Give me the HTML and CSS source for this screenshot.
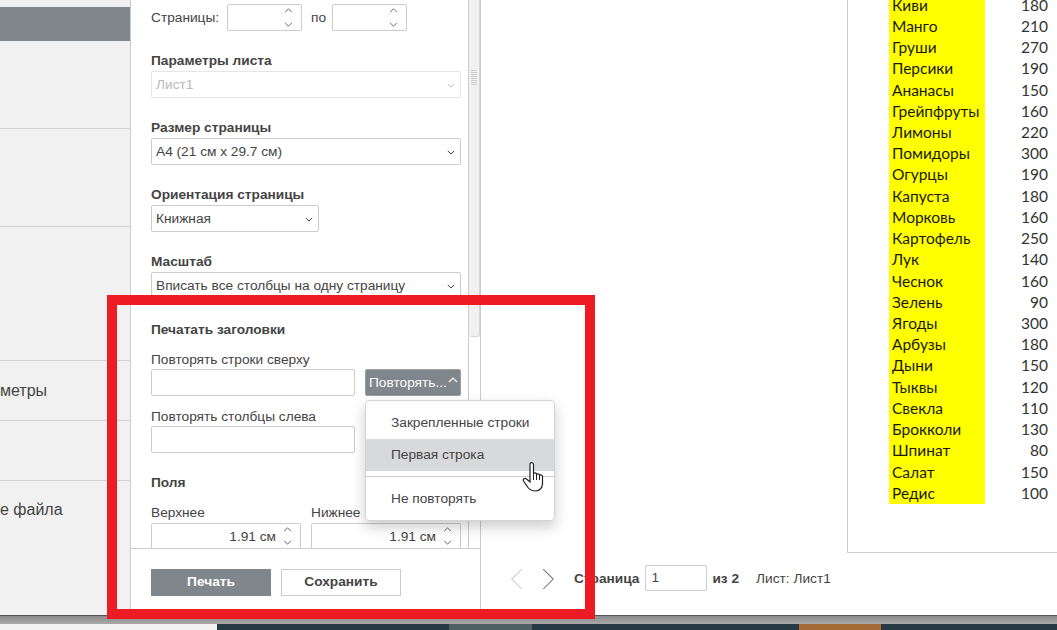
FILE: index.html
```html
<!DOCTYPE html>
<html lang="ru">
<head>
<meta charset="utf-8">
<title>Печать</title>
<link rel="stylesheet" href="styles.css">
</head>
<body>
<svg class="sprite" width="0" height="0" aria-hidden="true">
  <symbol id="down" viewBox="0 0 10 6"><path d="M1 1l4 4 4-4" fill="none" stroke="currentColor" stroke-width="1.2"/></symbol>
  <symbol id="up" viewBox="0 0 10 6"><path d="M1 5l4-4 4 4" fill="none" stroke="currentColor" stroke-width="1.2"/></symbol>
</svg>
<div class="app">
  <aside class="side">
    <div class="side-active"></div>
    <div class="side-item h88"></div>
    <div class="side-item h98"></div>
    <div class="side-item h134"></div>
    <div class="side-item h60">метры</div>
    <div class="side-item h60"></div>
    <div class="side-item h58 noline">е файла</div>
  </aside>

  <section class="panel">
    <div class="scroll">
      <div class="pages">
        <span class="pages-label">Страницы:</span>
        <div class="box spin w75"><svg class="ic-up"><use href="#up"/></svg><svg class="ic-down"><use href="#down"/></svg></div>
        <span class="po">по</span>
        <div class="box spin w75"><svg class="ic-up"><use href="#up"/></svg><svg class="ic-down"><use href="#down"/></svg></div>
      </div>
      <div class="group first-group">
        <div class="head">Параметры листа</div>
        <div class="box select disabled">Лист1<svg class="ic-sel"><use href="#down"/></svg></div>
      </div>
      <div class="group">
        <div class="head">Размер страницы</div>
        <div class="box select">A4 (21 см x 29.7 см)<svg class="ic-sel"><use href="#down"/></svg></div>
      </div>
      <div class="group">
        <div class="head">Ориентация страницы</div>
        <div class="box select w168">Книжная<svg class="ic-sel"><use href="#down"/></svg></div>
      </div>
      <div class="group">
        <div class="head">Масштаб</div>
        <div class="box select">Вписать все столбцы на одну страницу<svg class="ic-sel"><use href="#down"/></svg></div>
      </div>
      <div class="group-b">
        <div class="head">Печатать заголовки</div>
        <div class="label first">Повторять строки сверху</div>
        <div class="row">
          <div class="box w204"></div>
          <div class="repeat">Повторять...<svg class="ic-rep"><use href="#up"/></svg></div>
        </div>
        <div class="label second">Повторять столбцы слева</div>
        <div class="row"><div class="box w204"></div></div>
      </div>
      <div class="group-c">
        <div class="head">Поля</div>
        <div class="margins">
          <div><div class="label-m">Верхнее</div><div class="box spin val">1.91 см<svg class="ic-up"><use href="#up"/></svg><svg class="ic-down"><use href="#down"/></svg></div></div>
          <div><div class="label-m">Нижнее</div><div class="box spin val">1.91 см<svg class="ic-up"><use href="#up"/></svg><svg class="ic-down"><use href="#down"/></svg></div></div>
        </div>
      </div>
      <div class="scrollbar"><div class="thumb"><div class="grip"></div></div></div>
    </div>
    <div class="foot">
      <div class="btn primary">Печать</div>
      <div class="btn">Сохранить</div>
    </div>
    <div class="menu">
      <div class="menu-item">Закрепленные строки</div>
      <div class="menu-item hover">Первая строка</div>
      <div class="menu-sep"></div>
      <div class="menu-item">Не повторять</div>
    </div>
  </section>

  <main class="preview">
    <div class="stage">
      <div class="sheet">
        <div class="tbl">
          <div class="tr"><span class="n">Киви</span><span class="v">180</span></div>
          <div class="tr"><span class="n">Манго</span><span class="v">210</span></div>
          <div class="tr"><span class="n">Груши</span><span class="v">270</span></div>
          <div class="tr"><span class="n">Персики</span><span class="v">190</span></div>
          <div class="tr"><span class="n">Ананасы</span><span class="v">150</span></div>
          <div class="tr"><span class="n">Грейпфруты</span><span class="v">160</span></div>
          <div class="tr"><span class="n">Лимоны</span><span class="v">220</span></div>
          <div class="tr"><span class="n">Помидоры</span><span class="v">300</span></div>
          <div class="tr"><span class="n">Огурцы</span><span class="v">190</span></div>
          <div class="tr"><span class="n">Капуста</span><span class="v">180</span></div>
          <div class="tr"><span class="n">Морковь</span><span class="v">160</span></div>
          <div class="tr"><span class="n">Картофель</span><span class="v">250</span></div>
          <div class="tr"><span class="n">Лук</span><span class="v">140</span></div>
          <div class="tr"><span class="n">Чеснок</span><span class="v">160</span></div>
          <div class="tr"><span class="n">Зелень</span><span class="v">90</span></div>
          <div class="tr"><span class="n">Ягоды</span><span class="v">300</span></div>
          <div class="tr"><span class="n">Арбузы</span><span class="v">180</span></div>
          <div class="tr"><span class="n">Дыни</span><span class="v">150</span></div>
          <div class="tr"><span class="n">Тыквы</span><span class="v">120</span></div>
          <div class="tr"><span class="n">Свекла</span><span class="v">110</span></div>
          <div class="tr"><span class="n">Брокколи</span><span class="v">130</span></div>
          <div class="tr"><span class="n">Шпинат</span><span class="v">80</span></div>
          <div class="tr"><span class="n">Салат</span><span class="v">150</span></div>
          <div class="tr"><span class="n">Редис</span><span class="v">100</span></div>
        </div>
      </div>
    </div>
    <div class="pager">
      <svg class="arrow off" viewBox="0 0 12 20"><path d="M11 1L1.500 10.500 11 20" fill="none" stroke="currentColor"/></svg>
      <svg class="arrow" viewBox="0 0 12 20"><path d="M1 1l9.500 9.500L1 20" fill="none" stroke="currentColor"/></svg>
      <b class="pg">Страница</b>
      <div class="pgbox">1</div>
      <b class="of">из 2</b>
      <span class="sheetname">Лист: Лист1</span>
    </div>
  </main>
</div>

<div class="strip"></div>
<div class="taskbar">
  <div class="tb light"></div><div class="tb dark w232"></div><div class="tb mid"></div><div class="tb dark w267"></div><div class="tb orange"></div><div class="tb dark grow"></div>
</div>

<div class="redbox"></div>
<svg class="hand" viewBox="0 0 24 32"><path d="M8 3.500c0-2.600 3.500-2.600 3.500 0V13c0-1.500 3-1.500 3 0v1c0-1.500 3-1.500 3 0v1c0-1.500 3-1.500 3 .500v7c0 4-2.500 7.500-7 7.500-3.500 0-5.500-1-7.500-3.500L1.500 20c-1-1.800 1.500-3.500 3-2L8 21z" fill="#fff" stroke="#222" stroke-width="1.200"/><path d="M11.500 13v6M14.500 14v5M17.500 15v4" stroke="#222" fill="none"/></svg>
</body>
</html>
```

FILE: styles.css
```css
* { box-sizing: border-box; }
html, body { margin: 0; height: 630px; overflow: hidden; background: #fff; }
body { font-family: "Liberation Sans", Arial, sans-serif; font-size: 13.7px; color: #444; position: relative; }
.sprite { position: absolute; }

.app { display: flex; height: 616px; border-bottom: 1px solid #555; }

.side { width: 130px; flex: none; background: #f1f1f1; padding-top: 7px; overflow: hidden; }
.side-active { height: 34px; background: #7f868c; }
.side-item { border-bottom: 1px solid #d0d0d0; display: flex; align-items: center; font-size: 16px; }
.h88 { height: 88px; } .h98 { height: 98px; } .h134 { height: 134px; } .h60 { height: 60px; } .h58 { height: 58px; }
.noline { border-bottom: 0; }

.panel { width: 351px; flex: none; border-left: 1px solid #ccc; border-right: 1px solid #ccc; display: flex; flex-direction: column; position: relative; background: #fff; }
.scroll { height: 548px; padding-left: 20px; position: relative; overflow: hidden; flex: none; }
.pages { display: flex; align-items: center; padding-top: 4px; height: 30px; }
.pages-label { width: 76px; flex: none; }
.po { margin: 0 7px 0 9px; width: 14px; }
.box { height: 27px; border: 1px solid #ccc; border-radius: 2px; position: relative; background: #fff; }
.w75 { width: 75px; flex: none; }
.spin svg { position: absolute; right: 8px; width: 9px; height: 5px; color: #666; }
.ic-up { top: 3px; }
.ic-down { bottom: 3px; }
.group { margin-top: 21px; }
.first-group { margin-top: 22px; }
.head { font-weight: bold; height: 16px; line-height: 18px; color: #444; }
.group .head { margin-bottom: 3px; }
.select { width: 310px; line-height: 25px; padding-left: 4px; white-space: nowrap; }
.disabled { color: #b9b9b9; border-color: #e6e6e6; }
.ic-sel { position: absolute; right: 5px; top: 11px; width: 8px; height: 5px; color: #333; }
.disabled .ic-sel { color: #bbb; }
.w168 { width: 168px; }
.w204 { width: 204px; }
.group-b { margin-top: 22px; }
.label { height: 16px; line-height: 18px; }
.first { margin-top: 14px; margin-bottom: 2px; }
.second { margin-top: 12px; margin-bottom: 2px; }
.row { display: flex; gap: 10px; }
.repeat { width: 96px; height: 27px; background: #7f868c; border: 1px solid #9a9fa3; border-radius: 2px; color: #fff; display: flex; align-items: center; padding-left: 3px; white-space: nowrap; }
.ic-rep { width: 10px; height: 6px; color: #fff; margin-left: 1px; margin-top: -5px; flex: none; }
.group-c { margin-top: 21px; }
.margins { display: flex; gap: 10px; margin-top: 14px; }
.margins > div { width: 150px; }
.label-m { height: 16px; line-height: 18px; margin-bottom: 3px; }
.val { width: 150px; height: 36px; text-align: right; padding: 4px 24px 0 0; line-height: 18px; }
.val .ic-up { top: 3px; }
.val .ic-down { top: 16px; bottom: auto; }

.scrollbar { position: absolute; right: 0; top: 0; width: 12px; height: 100%; background: #fff; border-left: 1px solid #ccc; }
.thumb { height: 337px; background: #f1f1f1; border: 1px solid #d6d6d6; border-top: 0; border-radius: 0 0 3px 3px; border-left: 0; padding-top: 70px; }
.grip { width: 6px; height: 15px; margin: 0 auto; background: repeating-linear-gradient(#ccc 0 1px, transparent 1px 2px); }

.foot { flex: 1; border-top: 1px solid #ccc; padding: 20px 0 0 20px; display: flex; gap: 10px; align-items: flex-start; }
.btn { width: 120px; height: 27px; border: 1px solid #ccc; font-weight: bold; text-align: center; line-height: 24px; color: #444; background: #fff; }
.primary { background: #7f868c; border-color: #7f868c; color: #fff; }

.menu { position: absolute; left: 234px; top: 400px; width: 190px; height: 121px; background: #fff; border: 1px solid #d4d4d4; border-radius: 4px; box-shadow: 0 6px 14px rgba(0,0,0,.2); padding-top: 6px; z-index: 3; }
.menu-item { height: 32px; line-height: 32px; padding-left: 25px; color: #444; }
.hover { background: #d8d9db; }
.menu-sep { height: 1px; background: #ccc; margin: 5px 0 6px; }

.preview { flex: 1; display: flex; flex-direction: column; min-width: 0; overflow: hidden; }
.stage { height: 553px; padding-left: 366px; flex: none; overflow: hidden; }
.sheet { display: flow-root; height: 553px; border: 1px solid #ccc; border-width: 0 0 1px 1px; padding-left: 41px; width: 300px; }
.tbl { font-family: Lato, "Noto Sans", sans-serif; font-size: 15.5px; width: 159px; margin-top: -5.3px; color: #1f1f1f; }
.tr { display: flex; height: 21.22px; line-height: 21px; }
.n { width: 96px; background: #ff0; padding-left: 3px; color: #1a1a00; }
.v { width: 63px; text-align: right; color: #333; }

.pager { flex: 1; display: flex; align-items: center; padding: 0 0 12px 29px; }
.arrow { width: 13px; height: 21px; color: #777; margin-right: 19px; flex: none; }
.arrow.off { color: #ccc; }
.pg { margin-right: 6px; }
.pgbox { width: 62px; height: 26px; border: 1px solid #ccc; border-radius: 2px; padding-left: 5px; line-height: 24px; }
.of { margin: 0 17px 0 5px; }

.strip { height: 8px; background: linear-gradient(#8c8c8c, #a8a8a8); }
.taskbar { display: flex; height: 6px; }
.tb { height: 100%; }
.light { width: 217px; background: #f1f1f1; }
.dark { background: #253a42; }
.w232 { width: 232px; } .w267 { width: 267px; }
.mid { width: 83px; background: #4f5f65; }
.orange { width: 82px; background: #a56a35; }
.grow { flex: 1; }

.redbox { position: absolute; left: 107px; top: 295px; width: 488px; height: 324px; border: 10px solid #ed1c24; z-index: 5; pointer-events: none; }
.hand { position: absolute; left: 522px; top: 461px; width: 24px; height: 32px; z-index: 6; }
```
